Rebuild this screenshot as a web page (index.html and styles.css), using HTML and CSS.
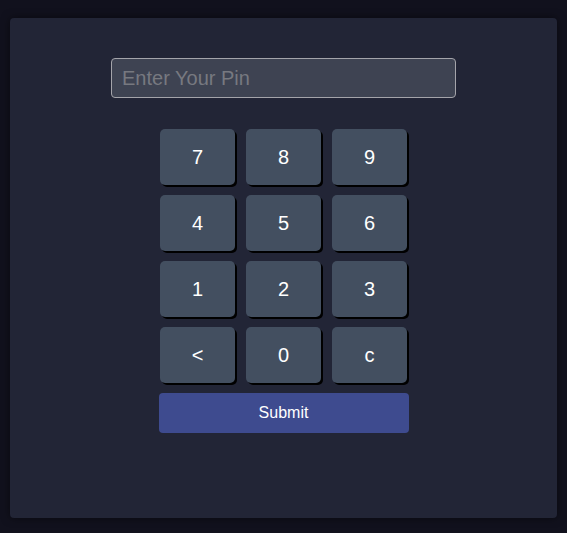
FILE: index.html
```html
<!DOCTYPE html>
<html>
<head>
<meta charset="utf-8">
<link rel="stylesheet" href="styles.css">
</head>
<body>
<div class="card">
  <input class="pin" type="text" placeholder="Enter Your Pin">
  <div class="pad">
    <button class="key">7</button>
    <button class="key">8</button>
    <button class="key">9</button>
    <button class="key">4</button>
    <button class="key">5</button>
    <button class="key">6</button>
    <button class="key">1</button>
    <button class="key">2</button>
    <button class="key">3</button>
    <button class="key">&lt;</button>
    <button class="key">0</button>
    <button class="key">c</button>
  </div>
  <button class="submit">Submit</button>
</div>
</body>
</html>
```
FILE: styles.css
```css
html, body {
  margin: 0;
  padding: 0;
  background: #11111d;
  font-family: "Liberation Sans", Arial, sans-serif;
}
body {
  padding: 18px 10px 15px 10px;
}
.card {
  width: 547px;
  height: 500px;
  box-sizing: border-box;
  background: #222536;
  border-radius: 4px;
  box-shadow: 0 0 8px rgba(0, 0, 0, 0.5);
  display: flex;
  flex-direction: column;
  align-items: center;
  padding-top: 40px;
}
.pin {
  width: 345px;
  height: 40px;
  box-sizing: border-box;
  background: #3e4352;
  border: 1px solid #a4a4aa;
  border-radius: 4px;
  padding: 0 10px;
  font-family: "Liberation Sans", Arial, sans-serif;
  font-size: 20px;
  color: #ddd;
  outline: none;
}
.pin::placeholder {
  color: #777980;
}
.pad {
  margin-top: 31px;
  display: grid;
  grid-template-columns: repeat(3, 75px);
  grid-auto-rows: 56px;
  column-gap: 11px;
  row-gap: 10px;
}
.key {
  background: #434f60;
  border: none;
  border-radius: 5px;
  box-shadow: 2px 2px 0 #000;
  color: #fff;
  font-family: "Liberation Sans", Arial, sans-serif;
  font-size: 20px;
  padding: 0;
}
.submit {
  margin-top: 10px;
  width: 250px;
  height: 40px;
  background: #3e4b8f;
  border: none;
  border-radius: 4px;
  color: #fff;
  font-family: "Liberation Sans", Arial, sans-serif;
  font-size: 16px;
}
```
